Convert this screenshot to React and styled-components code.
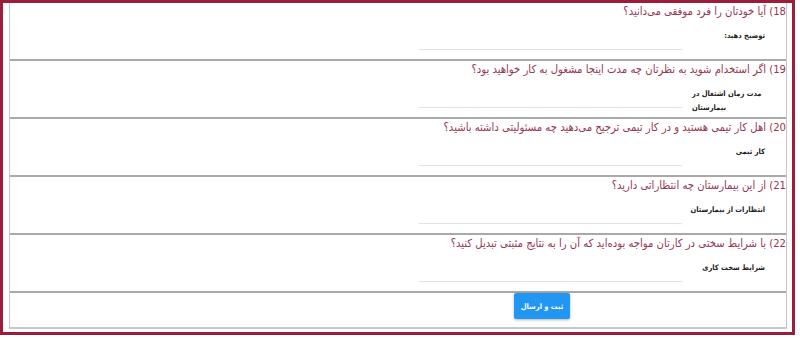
import React from "react";
import styled, { createGlobalStyle } from "styled-components";

const GlobalStyle = createGlobalStyle`
  html, body {
    margin: 0;
    padding: 0;
    background: #fff;
  }
  body {
    font-family: "DejaVu Sans Condensed", "DejaVu Sans", sans-serif;
  }
`;

const Frame = styled.div`
  box-sizing: border-box;
  width: 795px;
  height: 335px;
  border: 3px solid #9b1d3c;
  overflow: hidden;
`;

const FormBox = styled.div`
  margin: 0 5px 0 6px;
  height: 326px;
  box-sizing: border-box;
  border-left: 1px solid #c8c8c8;
  border-right: 1px solid #c8c8c8;
  border-bottom: 2px solid #c8c8c8;
  direction: rtl;
`;

const Row = styled.div`
  box-sizing: border-box;
  height: 58px;
  border-bottom: 2px solid #a9a9a9;
`;

const Question = styled.div`
  color: #983650;
  font-size: 11.2px;
  line-height: 18px;
  text-align: right;
`;

const Group = styled.div`
  display: flex;
  align-items: flex-start;
  gap: 10px;
  padding-right: 21px;
  margin-top: 8px;
`;

const Label = styled.label`
  width: 73px;
  flex-shrink: 0;
  font-size: 7.5px;
  font-weight: bold;
  color: #222;
  line-height: 14px;
  white-space: ${(p) => (p.$wrap ? "normal" : "nowrap")};
  text-align: ${(p) => (p.$wrap ? "left" : "right")};
`;

const Field = styled.input`
  width: 263px;
  height: 20px;
  border: none;
  border-bottom: 1px solid #e2e2e2;
  outline: none;
  background: transparent;
  padding: 0;
`;

const Footer = styled.div`
  display: flex;
  padding-right: 216px;
`;

const Submit = styled.button`
  width: 56px;
  height: 26px;
  border: none;
  border-radius: 2px;
  background: #2196f3;
  color: #fff;
  font-family: "DejaVu Sans Condensed", "DejaVu Sans", sans-serif;
  font-size: 7.5px;
  font-weight: bold;
  box-shadow: 0 1px 3px rgba(0, 0, 0, 0.3);
  padding: 0;
`;

const questions = [
  { id: 18, text: "آیا خودتان را فرد موفقی می‌دانید؟", label: "توضیح دهید:" },
  {
    id: 19,
    text: "اگر استخدام شوید به نظرتان چه مدت اینجا مشغول به کار خواهید بود؟",
    label: "مدت زمان اشتغال در بیمارستان",
    wrap: true,
  },
  {
    id: 20,
    text: "اهل کار تیمی هستید و در کار تیمی ترجیح می‌دهید چه مسئولیتی داشته باشید؟",
    label: "کار تیمی",
  },
  { id: 21, text: "از این بیمارستان چه انتظاراتی دارید؟", label: "انتظارات از بیمارستان" },
  {
    id: 22,
    text: "با شرایط سختی در کارتان مواجه بوده‌اید که آن را به نتایج مثبتی تبدیل کنید؟",
    label: "شرایط سخت کاری",
  },
];

export default function App() {
  return (
    <>
      <GlobalStyle />
      <Frame>
        <FormBox>
          {questions.map((q) => (
            <Row key={q.id}>
              <Question>{q.id}) {q.text}</Question>
              <Group>
                <Label $wrap={q.wrap}>{q.label}</Label>
                <Field type="text" />
              </Group>
            </Row>
          ))}
          <Footer>
            <Submit>ثبت و ارسال</Submit>
          </Footer>
        </FormBox>
      </Frame>
    </>
  );
}
